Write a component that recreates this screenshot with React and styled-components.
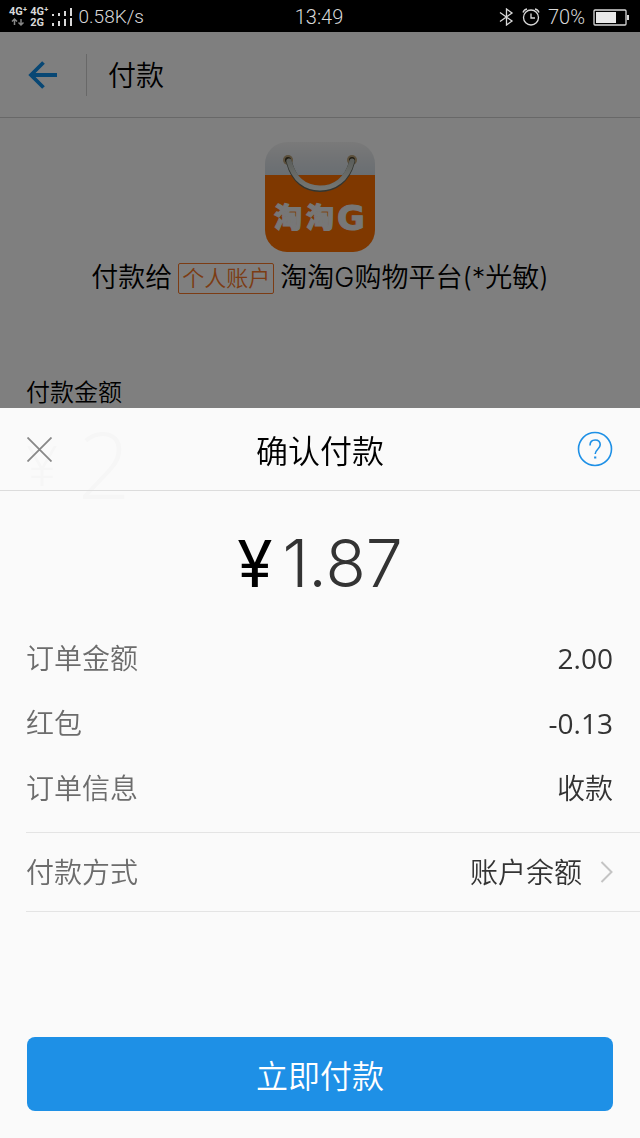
import React from 'react'
import styled, { createGlobalStyle, css } from 'styled-components'

const colors = {
  blue: '#108ee9',
  button: '#1e90e6',
  orange: '#f87828',
  ink: '#000',
  text: '#333',
  muted: '#6c6c6c',
  line: '#e4e4e4',
}

const GlobalStyle = createGlobalStyle`
  * {
    box-sizing: border-box;
  }

  body {
    margin: 0;
    background: #fff;
    color: ${colors.ink};
    font-family: 'Open Sans', 'Noto Sans CJK SC', sans-serif;
    font-weight: 350;
  }

  button {
    padding: 0;
    border: none;
    background: none;
    color: inherit;
    font: inherit;
    cursor: pointer;
  }

  svg {
    display: block;
  }
`

const flexCenter = css`
  display: flex;
  align-items: center;
`

const StatusBar = styled.div`
  display: grid;
  grid-template-columns: 1fr auto 1fr;
  align-items: center;
  position: relative;
  z-index: 3;
  height: 32px;
  padding: 2px 11px 0 9px;
  background: #000;
  color: #d8d8d8;
  font-family: Roboto, sans-serif;
  font-size: 20px;
  font-weight: 300;
  line-height: 30px;
`

const StatusGroup = styled.div`
  ${flexCenter}
  justify-content: ${({ end }) => (end ? 'flex-end' : 'flex-start')};
  gap: ${({ end }) => (end ? 8 : 3)}px;
`

const Network = styled.div`
  display: flex;
  flex-direction: column;
  font-size: 11px;
  font-weight: 700;
  line-height: 11px;

  svg {
    margin-left: 2px;
  }
`

const Speed = styled.span`
  margin-left: 4px;
  font-size: 19px;
`

const Header = styled.header`
  ${flexCenter}
  height: 86px;
  padding: 0 28px;
  border-bottom: 1px solid #d0d0d0;
`

const BackButton = styled.button`
  ${flexCenter}
  padding-right: 28px;
  color: ${colors.blue};
`

const HeaderTitle = styled.h1`
  margin: 0;
  padding-left: 21px;
  border-left: 1px solid #d0d0d0;
  font-size: 28px;
  font-weight: 350;
  line-height: 42px;
`

const Payee = styled.section`
  display: flex;
  flex-direction: column;
  align-items: center;
  gap: 6px;
  padding-top: 24px;
`

const PayeeName = styled.p`
  ${flexCenter}
  gap: 6px;
  margin: 0;
  font-family: Inter, 'Noto Sans CJK SC', sans-serif;
  font-size: 27px;
  line-height: 40px;
  white-space: nowrap;
`

const Tag = styled.span`
  padding: 0 3px;
  border: 1px solid ${colors.orange};
  border-radius: 2px;
  color: ${colors.orange};
  font-size: 22px;
  line-height: 29px;
`

const AmountField = styled.section`
  padding: 76px 26px 0;
`

const FieldLabel = styled.div`
  font-size: 24px;
  line-height: 36px;
`

const FieldValue = styled.div`
  ${flexCenter}
  gap: 20px;
  padding-top: 14px;
  font-size: 92px;
  line-height: 80px;

  small {
    font-size: 56px;
  }
`

const Scrim = styled.div`
  position: fixed;
  inset: 0;
  z-index: 1;
  background: rgba(0, 0, 0, 0.5);
`

const Sheet = styled.section`
  position: fixed;
  right: 0;
  bottom: 0;
  left: 0;
  z-index: 2;
  background: rgba(254, 254, 254, 0.97);
`

const SheetHeader = styled.header`
  display: grid;
  grid-template-columns: 1fr auto 1fr;
  align-items: center;
  height: 83px;
  padding: 0 27px;
  border-bottom: 1px solid #dcdcdc;
  color: #888;
`

const SheetTitle = styled.h2`
  margin: 0;
  padding-top: 4px;
  color: ${colors.ink};
  font-size: 32px;
  font-weight: 350;
  line-height: 48px;
`

const HelpButton = styled.button`
  justify-self: end;
  color: ${colors.button};
`

const Total = styled.div`
  display: flex;
  align-items: baseline;
  justify-content: center;
  gap: 10px;
  height: 134px;
  padding-top: 34px;
  color: ${colors.text};
  font-family: Inter, sans-serif;
  font-size: 66px;
  font-weight: 300;
  line-height: 76px;

  span {
    color: ${colors.ink};
    font-size: 64px;
    font-weight: 400;
  }
`

const Details = styled.dl`
  margin: 0 0 0 26px;
  padding-bottom: 12px;
  border-bottom: 1px solid ${colors.line};
`

const rowStyle = css`
  ${flexCenter}
  justify-content: space-between;
  padding-right: 27px;
  font-size: 28px;
  line-height: 40px;
`

const Row = styled.div`
  ${rowStyle}
  height: 65px;

  dt {
    color: ${colors.muted};
  }

  dd {
    margin: 0;
    color: ${colors.text};
    font-weight: ${({ $numeric }) => ($numeric ? 400 : 350)};
  }
`

const MethodRow = styled.div`
  display: grid;
  margin-left: 26px;
  border-bottom: 1px solid ${colors.line};

  button {
    ${rowStyle}
    height: 78px;
    color: ${colors.muted};
  }
`

const MethodValue = styled.span`
  ${flexCenter}
  gap: 18px;
  color: ${colors.text};
`

const Footer = styled.footer`
  display: grid;
  padding: 125px 27px 27px;
`

const PayButton = styled.button`
  && {
    height: 74px;
    border-radius: 8px;
    background: ${colors.button};
    color: #fff;
    font-size: 32px;
  }
`

const details = [
  { label: '订单金额', value: '2.00', numeric: true },
  { label: '红包', value: '-0.13', numeric: true },
  { label: '订单信息', value: '收款' },
]

const DataArrows = () => (
  <svg width="14" height="11" fill="none" stroke="#888" strokeWidth="1.5">
    <path d="M3.5 8V2M1 4.5 3.5 2 6 4.5M10 2v6M7.5 5.5 10 8l2.500-2.500" />
  </svg>
)

const SignalBars = () => (
  <svg width="20" height="18" fill="currentColor">
    <path d="M0 6h2v2H0zM6 5h2v3H6zM12 3h2v5h-2zM18 0h2v8h-2zM0 15h2v3H0zM6 13h2v5H6zM12 11h2v7h-2zM18 10h2v8h-2z" />
  </svg>
)

const BluetoothIcon = () => (
  <svg width="15" height="18" fill="none" stroke="currentColor" strokeWidth="1.3">
    <path d="M1 4.500 13 13 7.500 17V1L13 5 1 13.500" />
  </svg>
)

const AlarmIcon = () => (
  <svg width="18" height="18" fill="none" stroke="currentColor" strokeWidth="1.3">
    <circle cx="9" cy="9.500" r="7.500" />
    <path d="M9 5.500V10h4M1 4.500Q2 1.500 5 1M17 4.500Q16 1.500 13 1" />
  </svg>
)

const BatteryIcon = () => (
  <svg width="36" height="17">
    <rect x="1" y="1" width="32" height="15" rx="1" fill="none" stroke="#d8d8d8" strokeWidth="1.3" />
    <path d="M3 3h20v11H3z" fill="#e8e8e8" />
    <path d="M34 6h2v5h-2z" fill="#d8d8d8" />
  </svg>
)

const BackIcon = () => (
  <svg width="30" height="28" fill="none" stroke="currentColor" strokeWidth="3.800">
    <path d="M15.500 1.500 3 14l12.500 12.500M3 14h26" />
  </svg>
)

const CloseIcon = () => (
  <svg width="25" height="25" fill="none" stroke="currentColor" strokeWidth="1.800">
    <path d="m.5.5 24 24M24.500.5l-24 24" />
  </svg>
)

const HelpIcon = () => (
  <svg width="36" height="36" fill="none" stroke="currentColor" strokeWidth="1.600">
    <circle cx="18" cy="18" r="16.500" />
    <path d="M13 14.500c0-3.500 2.200-5.500 5.200-5.500s5 2 5 4.800c0 4.200-5 4.700-5 9.200" />
    <path d="M18.200 25.500v2" strokeWidth="2.200" />
  </svg>
)

const ChevronIcon = () => (
  <svg width="13" height="22" fill="none" stroke="#c4c4c4" strokeWidth="2">
    <path d="m1.500 1 10 10-10 10" />
  </svg>
)

const ShopLogo = () => (
  <svg width="110" height="110" viewBox="0 0 110 110" role="img" aria-label="淘淘G">
    <defs>
      <linearGradient id="bag-top" x2="0" y2="1">
        <stop offset="0" stopColor="#f4f4f4" />
        <stop offset="0.5" stopColor="#e2e6ea" />
        <stop offset="1" stopColor="#d2dce4" />
      </linearGradient>
      <linearGradient id="bag-handle" x2="0" y2="1">
        <stop offset="0" stopColor="#b8beb8" />
        <stop offset="1" stopColor="#e8ece6" />
      </linearGradient>
      <clipPath id="bag-shape">
        <rect width="110" height="110" rx="22" />
      </clipPath>
    </defs>
    <g clipPath="url(#bag-shape)">
      <path d="M0 0h110v34H0z" fill="url(#bag-top)" />
      <path d="M0 33h110v77H0z" fill="#ff7000" />
    </g>
    <circle cx="23" cy="18" r="5" fill="#b8a078" />
    <circle cx="87" cy="18" r="5" fill="#b8a078" />
    <circle cx="23" cy="18" r="3" fill="#3c3420" />
    <circle cx="87" cy="18" r="3" fill="#3c3420" />
    <g fill="none" strokeLinecap="round">
      <path d="M24 20c5 19 17 27 31 27s27-8 32-27" stroke="#666b60" strokeWidth="6" />
      <path d="M24 19c5 19 17 27 31 27s27-8 32-27" stroke="url(#bag-handle)" strokeWidth="5" />
    </g>
    <text
      x="9"
      y="86"
      fill="#eee"
      stroke="#eee"
      strokeWidth="1"
      fontFamily="'Noto Sans CJK SC', sans-serif"
      fontSize="28"
      fontWeight="900"
    >
      淘
      <tspan x="41">淘</tspan>
      <tspan x="72" y="88" fontFamily="'DejaVu Sans', sans-serif" fontSize="34">G</tspan>
    </text>
  </svg>
)

const Status = () => (
  <StatusBar>
    <StatusGroup>
      <Network>
        <span>4G⁺</span>
        <DataArrows />
      </Network>
      <Network>
        <span>4G⁺</span>
        <span>2G</span>
      </Network>
      <SignalBars />
      <Speed>0.58K/s</Speed>
    </StatusGroup>
    <span>13:49</span>
    <StatusGroup end>
      <BluetoothIcon />
      <AlarmIcon />
      <span>70%</span>
      <BatteryIcon />
    </StatusGroup>
  </StatusBar>
)

const PaymentPage = () => (
  <main>
    <Header>
      <BackButton type="button" aria-label="返回">
        <BackIcon />
      </BackButton>
      <HeaderTitle>付款</HeaderTitle>
    </Header>
    <Payee>
      <ShopLogo />
      <PayeeName>
        付款给
        <Tag>个人账户</Tag>
        淘淘G购物平台(*光敏)
      </PayeeName>
    </Payee>
    <AmountField>
      <FieldLabel>付款金额</FieldLabel>
      <FieldValue>
        <small>¥</small>2
      </FieldValue>
    </AmountField>
  </main>
)

const ConfirmSheet = () => (
  <Sheet role="dialog" aria-modal="true" aria-labelledby="sheet-title">
    <SheetHeader>
      <button type="button" aria-label="关闭">
        <CloseIcon />
      </button>
      <SheetTitle id="sheet-title">确认付款</SheetTitle>
      <HelpButton type="button" aria-label="帮助">
        <HelpIcon />
      </HelpButton>
    </SheetHeader>
    <Total>
      <span>¥</span>1.87
    </Total>
    <Details>
      {details.map(({ label, value, numeric }) => (
        <Row key={label} $numeric={numeric}>
          <dt>{label}</dt>
          <dd>{value}</dd>
        </Row>
      ))}
    </Details>
    <MethodRow>
      <button type="button">
        付款方式
        <MethodValue>
          账户余额
          <ChevronIcon />
        </MethodValue>
      </button>
    </MethodRow>
    <Footer>
      <PayButton type="button">立即付款</PayButton>
    </Footer>
  </Sheet>
)

const App = () => (
  <>
    <GlobalStyle />
    <Status />
    <PaymentPage />
    <Scrim />
    <ConfirmSheet />
  </>
)

export default App
